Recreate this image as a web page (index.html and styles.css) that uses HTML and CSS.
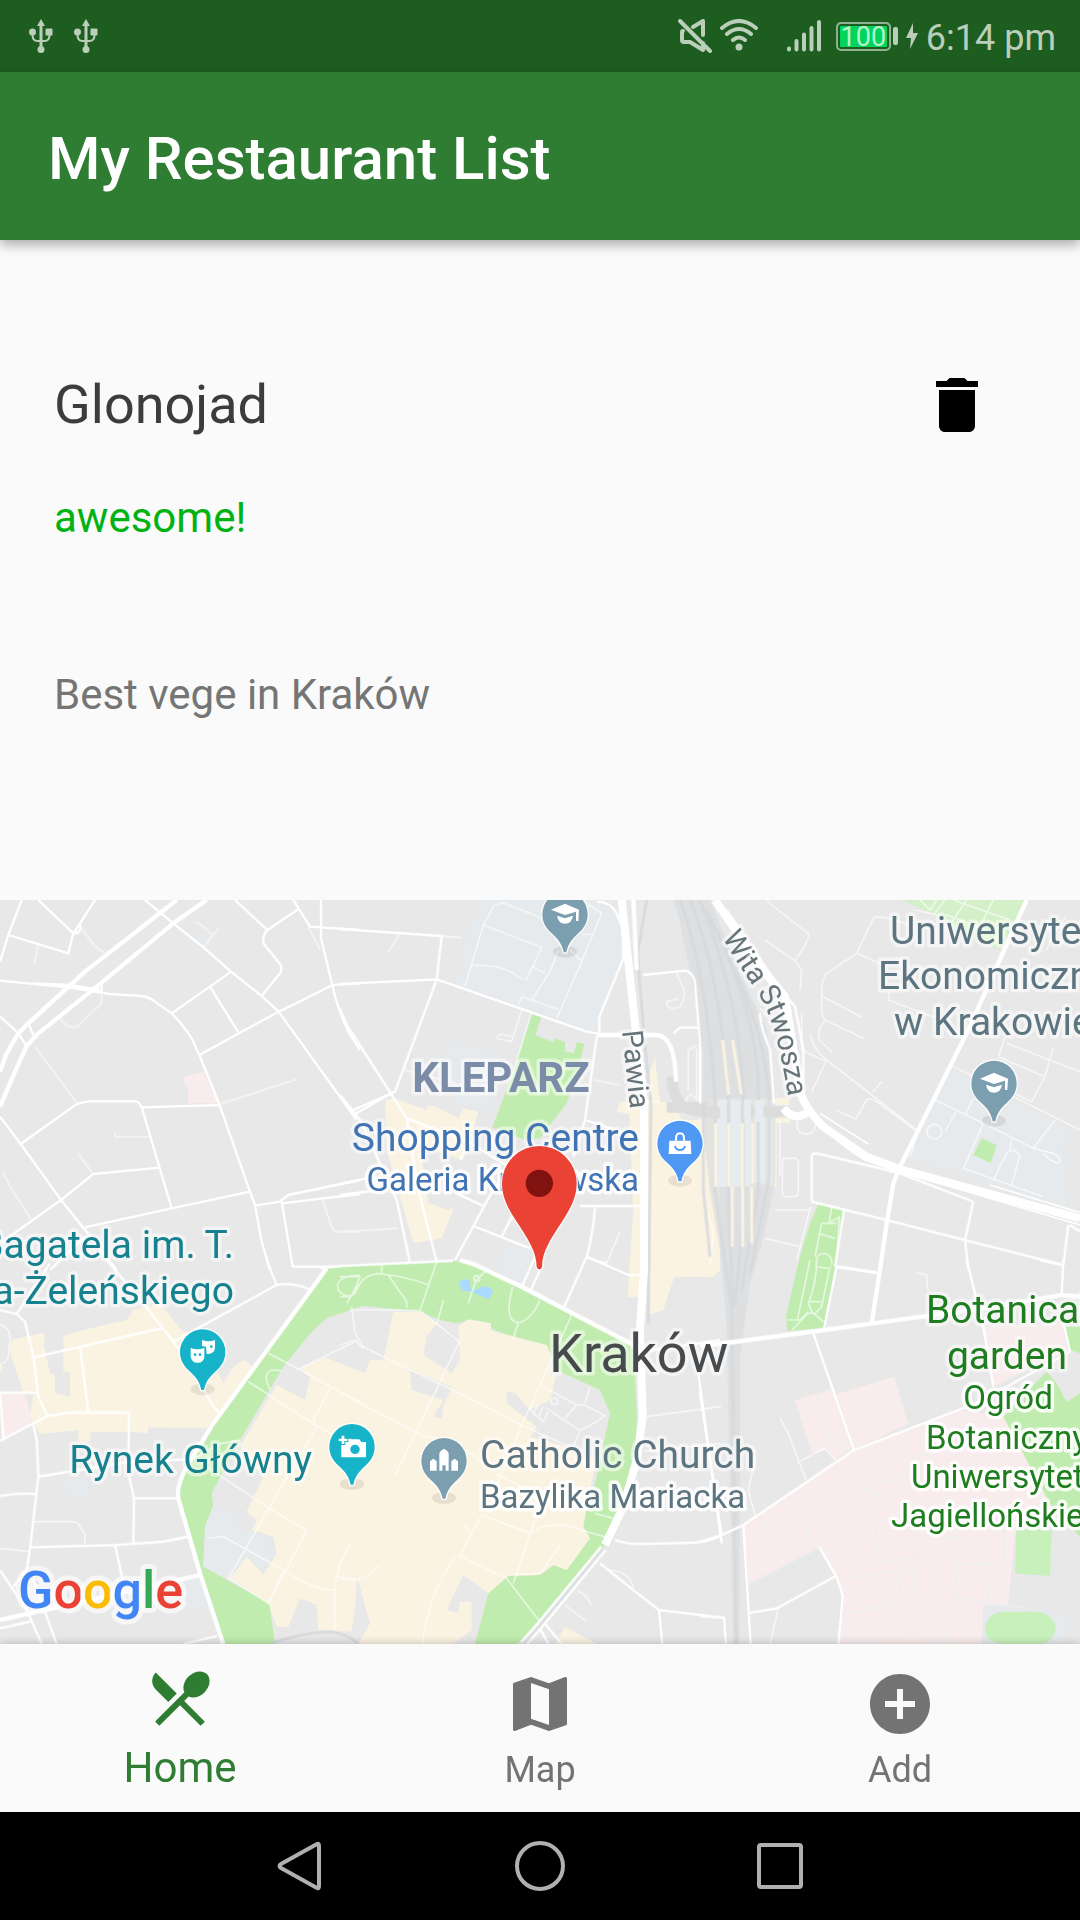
FILE: index.html
```html
<!DOCTYPE html>
<html lang="en">
<head>
<meta charset="utf-8">
<meta name="viewport" content="width=device-width, initial-scale=1">
<title>My Restaurant List</title>
<link rel="stylesheet" href="styles.css">
</head>
<body>
<div class="app">
  <div class="status">
    <svg class="usb" viewBox="0 0 24 34"><path d="M12 0l4 7H8zM10.500 6h3v22h-3z"/><circle cx="12" cy="30.500" r="3.500"/><circle cx="3.500" cy="13" r="3.500"/><rect x="16.500" y="9.500" width="7" height="7" rx="1"/><path class="line" d="M3.500 14v2q0 6 5 6h7q5 0 5-6v-2"/></svg>
    <svg class="usb" viewBox="0 0 24 34"><path d="M12 0l4 7H8zM10.500 6h3v22h-3z"/><circle cx="12" cy="30.500" r="3.500"/><circle cx="3.500" cy="13" r="3.500"/><rect x="16.500" y="9.500" width="7" height="7" rx="1"/><path class="line" d="M3.500 14v2q0 6 5 6h7q5 0 5-6v-2"/></svg>
    <div class="status-end">
      <svg class="mute" viewBox="0 0 34 34"><path class="bold" d="M2 2l30 30M5 12q-1 0-1 1v8q0 2 2 2h6l13 8V24M15 8l10-6v14"/></svg>
      <svg class="wifi" viewBox="0 0 38 34"><path class="bold" d="M2 9q17-14 34 0M7 15q12-10 24 0M13 21q6-5 12 0"/><circle cx="19" cy="28" r="3.500"/></svg>
      <svg class="signal" viewBox="0 0 34 34"><path class="bar" d="M2 29.500v1M9.500 22v8.500M17 15.500v15M24.500 9v21.500M32 3v27.500"/></svg>
      <span class="battery"><span class="charge">100</span></span>
      <svg class="bolt" viewBox="0 0 12 26"><path d="M7 0L0 15h5L4 26 12 10H7z"/></svg>
      <time class="clock">6:14 pm</time>
    </div>
  </div>

  <header class="appbar"><h1>My Restaurant List</h1></header>

  <main>
    <article class="place">
      <div class="place-head">
        <h2>Glonojad</h2>
        <button class="delete" type="button" aria-label="Delete">
          <svg viewBox="0 0 24 24"><path d="M6 19c0 1.100.9 2 2 2h8c1.100 0 2-.9 2-2V7H6v12zM19 4h-3.500l-1-1h-5l-1 1H5v2h14V4z"/></svg>
        </button>
      </div>
      <p class="rating">awesome!</p>
      <p class="note">Best vege in Kraków</p>
    </article>

    <svg class="map" viewBox="0 0 1080 744" preserveAspectRatio="xMidYMid slice" role="img" aria-label="Map of Kraków">
      <defs>
        <g id="poi">
          <ellipse class="pin-shadow" cx="0" cy="112" rx="36" ry="18"/>
          <path class="pin-body" d="M-68 0A68 68 0 0 1 68 0C68 26 55 44 40 57C15 79 8 95 4 114H-4C-8 95-15 79-40 57C-55 44-68 26-68 0Z"/>
        </g>
        <g id="cap"><path d="M-42-14L0-32 42-14 40 20H33V-8L0 2ZM-24 4L0 12 24 4Q20 28 0 28T-24 4Z"/></g>
        <path id="wita" d="M722 37C736 63 751 81 763 102C778 133 782 163 789 200"/>
      </defs>

      <svg width="1080" height="744" viewBox="0 0 3240 2232">
        <!-- land use -->
        <g transform="translate(0 -30)">
          <path class="pink" d="M552 560L612 546 655 640H564V590L554 588Z"/>
          <path class="campus" d="M597 125L650 160 630 185 580 150ZM535 960L552 958 560 990 540 992Z"/>
        </g>
        <g transform="translate(1020 -30)">
          <path class="campus" d="M425 30H800Q850 60 850 140V200L778 370V425L740 420 640 380 345 285Q370 150 425 30ZM315 450L500 500 450 665 345 640 350 600 290 560ZM500 1060L580 1080 540 1200 470 1140Z"/>
          <path class="sand" d="M135 630L160 625 262 660V645L290 650 355 685 370 655 415 665 400 720 370 810 240 770 265 940 325 960 343 950 305 1045 220 1060 140 780ZM840 635H905V1220H863L880 960 868 672 830 665ZM925 560L945 500 960 635H1000L1025 690H1140V1140L1120 1160H1003L970 1260 925 1275Z"/>
          <path class="park" d="M573 373L604 382 586 436 640 456 645 445 675 456V484L700 490 711 456 733 462 715 540 680 640 600 745 555 750 457 712 520 545Z"/>
        </g>
        <g transform="translate(2100 -30)">
          <path class="sand" d="M0 685H42V1160H0ZM20 625H268V645H20ZM20 685H270V698H230V890H20Z"/>
          <path class="park pale" d="M605 30H975L900 180 830 150 720 80Z"/>
          <path class="campus" d="M750 535L1110 720 1088 760 1095 950 1060 940 630 800 690 660Z"/>
          <path class="park" d="M845 745L890 765 872 820 820 795ZM355 943L432 960 405 1130 372 1315 262 1323 258 1280 297 1110 330 1000Z"/>
        </g>
        <g transform="translate(0 1080)">
          <path class="sand" d="M0 310V340L8 320ZM28 270L35 240 130 218 140 280 190 265V228L260 208 380 180 400 150 480 130 545 210 600 230 660 350 670 370 700 320 730 300 760 320 620 505 445 502V520L390 515H270L272 545H235V510L120 522 90 470 100 400 70 400Z"/>
          <path class="land" d="M130 250L190 250 190 335 210 335V410L165 400V345L150 340Z"/>
          <path class="pink" d="M0 402H75L100 490 10 537Z"/>
          <path class="campus" d="M180 660L265 655V715L230 715 210 725ZM555 965L600 950 640 1045 540 1062Z"/>
          <path class="park" d="M670 1152L600 940 545 760Q528 700 540 665L560 620 640 490 975 30 1000 20 1360 2 1420 12 1540 75 1900 260 1910 450V560L1870 740 1810 865 1620 1090 1550 1152H1425L1465 1000 1525 948 1620 945 1660 915 1700 930 1770 835 1745 800 1790 650 1830 460 1800 390 1670 330 1640 270 1470 205 1405 180 1370 190 1320 180 1260 155 1090 137 980 175 935 215 850 320 720 540 635 700 640 740 615 800 610 920 808 1030 825 1152Z"/>
          <path class="campus" d="M640 735L705 770 700 800 800 830 800 860 828 880 790 930 745 900 740 880 685 955 610 920 615 800Z"/>
          <path class="sand" d="M900 325L975 292 1095 340 1110 300 1150 300 1180 155 1260 155 1310 190 1280 230 1270 285 1355 340 1380 300 1375 200 1405 178 1473 190V212L1640 255 1655 290 1650 350 1670 340 1650 420 1590 450 1545 400 1520 395V430L1610 500 1590 530 1700 560 1740 600 1790 590 1750 800 1770 835 1700 930 1660 915 1620 945 1525 948 1465 1000 1390 945 1340 1050 1375 1060 1380 1025H1415V1110L1360 1152H1075L1110 1090 1085 1000 1070 940 1068 1020 1055 1115 955 1110 950 1035 900 1015 865 1100 830 1100 805 1030 690 955 740 890 790 945 830 880 820 830 755 810 770 780 740 755 790 650 720 560 830 375 915 420 930 350Z"/>
          <path class="land" d="M1230 330L1355 380 1330 440 1325 475 1300 470 1330 420 1235 390Z"/>
          <path class="water" d="M1378 70Q1390 50 1410 62L1412 88Q1430 92 1450 78 1480 82 1478 100L1465 118 1410 94 1385 92Z"/>
          <path class="sand" d="M1695 1100L1790 1152H1665Z"/>
        </g>
        <g transform="translate(2100 1080)">
          <path class="pink" d="M285 420L395 388 455 565 405 600 380 570 335 580ZM410 402L582 350 625 492 462 567ZM130 795L460 572 780 450 910 470 1080 740 945 820 925 1035H850V1152H415L428 1000 408 945 358 862 147 970ZM845 200L1090 190 1100 270 880 380Z"/>
          <path class="park" d="M1095 200H1140V280L1110 270ZM910 470L1040 335 1070 370 1100 425 1140 400V830L1060 750Z"/>
          <path class="campus" d="M850 1035L1097 1060 1090 1152H845Z"/>
          <path class="park pitch" d="M950 800L1055 810 1050 948 945 940ZM905 1055H1020Q1067 1070 1067 1110 1060 1140 1030 1152H900Q855 1140 855 1110 860 1060 905 1055Z"/>
        </g>

        <!-- footpaths and lanes -->
        <g class="lane">
          <path transform="translate(0 -30)" d="M115 165L102 225M245 115L285 170 315 190M105 470L230 638M345 725V740H445M235 790L278 850M10 845L30 890 95 990M660 642L890 568M590 95L640 135M610 170L655 115M305 310V340L230 410Q205 420 180 385M968 930L995 1010Q1000 1025 1020 1025H1080M925 110L960 180"/>
          <path transform="translate(1020 -30)" d="M375 290L430 105 460 50Q480 35 500 42L620 90M430 105L605 172 560 268Q540 268 520 250 480 225 395 225M650 385L725 215 785 70 740 40M575 330L630 245 655 180M575 228L615 250M725 133H755M690 180L725 213M535 345L545 320 655 358M545 360L515 455 470 445 480 432 515 440M573 373L520 545M0 1025L175 1015M178 132L145 187M305 138L365 143M195 540L350 580M760 570L840 585M1010 250L1025 285Q1045 310 1020 350 980 365 980 335L1015 325M1045 600V480L1080 460M1070 630V480Q1080 465 1090 480V640M1035 635L1050 612 1100 650M960 635H905M1105 970L1120 1030 1110 1130M840 1025L800 1120"/>
          <path transform="translate(2100 -30)" d="M200 30Q230 60 325 130 332 145 285 212L195 150M285 212L305 240 300 300M470 190L380 250Q365 270 365 300V370L375 390 490 445M365 318L487 382M375 390Q350 420 358 450L398 488M470 190L520 85Q540 70 640 110M470 190L560 230M330 430Q340 480 380 510L335 605M380 510L650 720M518 607L545 575M408 660L468 687 500 630Q510 622 530 635L645 720M705 630L850 700 1000 775 1065 690M750 525L1140 720M850 700L790 835 1030 920M880 870L920 790Q940 770 960 795L935 885M935 745L930 780M1000 775L1060 790Q1090 805 1075 820 1050 815 1030 790M735 725L768 665M795 675L820 625M895 500L1035 560 1060 470M920 460L1140 545M995 635L1035 560M995 635L890 585M915 440L895 500M570 300L565 330 750 400M305 370V480L380 515M180 355L200 380M247 817Q247 805 260 805H285Q295 806 295 817V905Q295 920 280 920H255Q247 918 247 900ZM225 960H335M195 1045L300 1070M332 950L290 1110M240 690V860M640 60L720 75M660 30L690 60 710 30M700 75L735 30M745 110L800 30M740 75L860 120M760 30L930 90M830 130L880 30M1040 180L1060 130 1100 80M630 800L660 710"/>
          <circle cx="2803" cy="695" r="22"/><circle cx="2418" cy="675" r="28"/>
          <path transform="translate(0 1080)" d="M0 195Q30 200 30 235L25 290Q20 310 0 312M100 785H210Q240 785 240 800L255 825V852M0 865L90 875M805 280L900 330 1000 385 1080 425M745 365L860 440 945 495 1040 545M950 500L940 480 990 385M890 330L1075 240M950 500L685 955 805 1030 850 930M590 600L800 740 920 812 805 1030M620 835L670 830 850 930Q940 990 1005 990L1003 1110M1005 1000Q1005 930 1050 850M1010 950L1080 960M810 388Q785 340 815 330L845 332M575 598L665 550 720 540M1080 45Q1000 50 1015 90 1040 120 1065 100L1080 70"/>
          <path transform="translate(1020 1080)" d="M125 15V42M0 50H60Q40 100 20 130M0 110H30L70 58Q90 40 125 42 200 50 268 75M290 5L240 152 300 200 358 245 165 648M145 45L200 125V145M30 150H160L240 152M35 140L45 220 70 260 230 340 360 400 545 495 720 575M0 398L250 528 300 535M0 255L45 240 70 265M385 130L408 60 440 32M518 80Q490 185 535 188 575 180 600 120M535 188L518 240M695 165L600 375 545 495 465 690M600 375L710 435H735L795 467 770 485 720 512 620 445M735 430L750 380M710 435L675 475M310 120L290 195M720 512L700 560M580 425L570 450 610 485 625 455M595 430L580 465M608 440L595 475M425 765L570 820Q600 795 650 795 690 795 725 810L800 832M425 765L360 888 500 955 600 1085M380 570L430 610M465 640L590 700M345 890L305 955Q255 1060 248 1152M360 888H345M585 780L570 820 520 970M525 942Q600 945 610 930L660 855M370 790L395 825M120 915Q80 960 30 960L0 955M30 850L0 915M765 760L820 775M920 470L1140 440M910 575L1140 550M800 930Q870 930 880 985M712 990Q745 1010 753 1035M675 1035L740 1085"/>
          <circle cx="1430" cy="1136" r="9"/><circle cx="1663" cy="1504" r="10"/>
          <path transform="translate(2100 1080)" d="M240 475L265 520 318 660M292 608L375 565 405 600M165 570V600L145 690 165 765M235 1045L210 1152M0 450L65 438M650 38L680 45 683 90M330 0L292 180M350 0Q350 70 325 130L335 155 370 185M345 20L385 25M325 125H365M390 20L365 140 345 160H325L275 210M260 180H300L325 155M360 950"/>
          <path transform="translate(2100 -30)" d="M365 1000L345 1100M395 950L388 1000 418 980 410 1110M365 1000H410M355 1030L405 1045M350 1120Q345 1090 375 1090 400 1100 395 1125"/>
        </g>
        <path class="garden-lane" transform="translate(2100 1080)" d="M350 405L398 555 450 540M350 405L395 388M265 705L305 782M175 765L245 863 320 825V803M222 833L300 785M320 803L503 683 620 640 640 590 760 560M503 683Q530 720 580 725M510 700L542 908 658 885 650 840 700 820M375 880L450 840 468 850 498 900M420 958L652 925 612 1115 735 1150 778 910V820M778 910H912V810M758 1008L860 1030 878 950 865 912M860 1030L990 1045M590 935Q602 990 600 1020L468 1058 425 1062M415 1135L540 1148M658 885L652 925M730 830H780M147 970L358 862"/>

        <!-- railway -->
        <g transform="translate(2100 -30)">
          <path class="rail-area" d="M-80 30L30 30 110 230 200 420 225 620V880L180 1080 150 1180 120 1400 118 2262H100L80 1300 60 1080 30 900 0 640-10 340-60 100Z"/>
          <path class="platform" d="M52 630H80V890H52ZM92 630H122V890H92ZM132 630H152V890H132ZM164 630H196V880H164ZM204 630H218V880H204Z"/>
          <path class="rail" d="M-60 30Q20 250 45 620V900L95 1250 108 2262M-30 30Q60 250 85 620V950L100 1250M0 30Q120 330 130 620V980L105 1250M20 60Q180 380 175 620V900L125 1200M30 90Q200 400 208 640V860L150 1150"/>
          <path class="sand-line" d="M68 450L86 615M98 450L124 612M47 700V890M86 700V890M127 700V890M158 700V880M97 890V1070M128 890V1070M155 890V1060"/>
          <path class="overpass" d="M-100 652H20"/><path class="overpass" d="M20 665H250"/>
          <path class="platform" d="M52 630H80V695H52ZM92 630H122V695H92ZM132 630H152V695H132ZM164 630H190V695H164Z"/>
        </g>
        <g transform="translate(1020 -30)">
          <path class="overpass" d="M995 560Q1000 625 1030 650 1060 668 1140 668"/>
          <path class="rail" d="M920 30L893 190 912 440 933 640 925 1300"/>
          <path class="rail" d="M1090 640V900L1110 1100"/>
        </g>
        <path class="rail" transform="translate(0 1080)" d="M810 1152Q900 1118 990 1115 1040 1120 1075 1152"/>

        <!-- streets -->
        <g class="street">
          <path transform="translate(0 -30)" d="M65 30L25 135 0 215M25 135L205 190 220 130 115 30M220 130L240 100 285 30M222 130Q245 130 240 102M0 272L205 292 330 312 425 318Q445 320 465 335L515 370Q550 405 575 445L598 495 657 640 750 905 765 945 785 1055 810 1140M100 280L205 285 300 300M305 310V280M435 30L520 100 610 172 693 245 785 318 836 365 1070 690M515 370L630 290 693 245M630 290L717 430M598 495L717 430 836 365 885 342 997 285 1080 280M785 318L840 250Q848 235 840 222L790 160Q788 135 802 120L705 30M802 120L895 58M880 30L930 110 1080 120M963 30V145L997 285Q1010 350 1045 425L1080 480M0 380L50 425M55 430L80 468M85 400L100 435M62 762L230 642 265 634H405Q418 634 425 652L515 955M425 652L657 645M0 680L62 762 183 930 255 1020 350 1140M0 1060L183 930 280 852 478 833M255 1012L515 955 750 905M765 947L840 935 865 915 1080 870M845 940L1080 912M845 935L878 1130H1020M150 1140L255 1040"/>
          <path transform="translate(1020 -30)" d="M0 117L305 138 290 268 0 282M290 268L740 425 770 430M290 268L165 605M0 355Q15 400 40 435L200 685 235 900 290 1115M40 660L165 605M45 672L150 612M0 615L60 690 170 930 210 1118M200 685L385 755 520 840M385 755L360 810M0 882L80 865M0 915L120 900M350 910L430 948M470 880L400 1008 345 1110M400 1008L570 1075M515 980L485 1040M720 948H905M765 950Q760 1030 740 1100L668 1260M740 1100L865 1155H900M770 440L735 690 700 800M778 440V380L850 205V120L830 70Q810 35 770 35M735 690L905 745M910 255L1035 242Q1060 245 1065 280L1080 460V630M1000 430L1020 413H1080M545 1190L590 1090M570 1205L600 1140"/>
          <path transform="translate(2100 -30)" d="M335 935L560 990 795 1050 1090 1125M820 935L795 1050 805 1140M1105 1005L1090 1125M600 850L820 935M410 1130L530 1148M1110 1005L1140 1025M335 935V800Q335 790 350 790L520 830 600 850M180 370Q178 400 210 480L222 640M0 480V640M80 60L250 310 285 350 310 480V600M432 960L405 1130"/>
          <path transform="translate(0 1080)" d="M0 150L50 162 75 185 100 290 115 410 142 468M50 162L150 10M320 0L430 130 520 245 560 300 640 440 662 462M100 292L485 205M520 245L830 75 800 0M830 75Q870 65 930 88M240 262L265 455M0 543L142 468 205 458H387L385 640 402 715 400 850M0 398H110M0 400L10 535M100 495L110 540 115 650 90 865 80 930 40 980M115 650L390 605 575 598M400 715H535M0 708Q60 698 112 702M90 862L345 855 490 845 565 830M345 855L370 970M0 930L80 1050 125 1152M100 960L170 1152M550 1152L650 1128M0 1105L90 1085"/>
          <path transform="translate(1020 1080)" d="M-60 25L0 18 340 2M760 0L800 10M905 275L1140 240M1075 340L1145 850M825 840Q860 852 900 852L1060 848Q1110 845 1140 828M780 910L880 990 957 1050 1140 1072M957 1050L967 1152M610 1085L665 1152M595 1095L625 1152"/>
          <path transform="translate(2100 1080)" d="M340 220L462 570M130 795L462 570 840 425 1110 275 1090 185M130 795L152 1152M0 845L65 825 130 795M0 400L65 825M150 1058L230 1045 408 948 358 862M408 948Q425 990 428 1010L415 1152M0 1068L72 1073 78 1152M410 20L530 38M800 0L850 200 880 380M1090 0L1085 105M1020 0L1090 15M410 20L372 205"/>
        </g>

        <!-- main roads -->
        <g class="avenue">
          <path transform="translate(0 -30)" d="M0 545L20 490 55 430 85 400 255 245 530 30M0 650L45 545 80 468 115 430 290 290 520 100 620 30"/>
          <path transform="translate(1020 -30)" d="M770 435H950Q1005 438 1008 575M880 30L890 240"/>
          <path transform="translate(2100 -30)" d="M980 30L800 430 600 830 580 880 560 1000 540 1140 515 1300"/>
          <path transform="translate(0 1080)" d="M980 25L640 490 560 620Q528 680 535 715L600 940 670 1152M0 1080L200 1035 600 945"/>
          <path transform="translate(1020 1080)" d="M360 0L400 12 545 80 890 260"/>
          <path transform="translate(2100 1080)" d="M0 258L108 245 335 215 520 190 850 145 1085 105 1140 110"/>
        </g>
        <g class="highway">
          <path transform="translate(1020 -30)" d="M845 30L885 400 912 640V1140L900 1320 908 1580 890 1710 850 1850 795 1965"/>
          <path transform="translate(2100 -30)" d="M45 30L180 230 255 320 300 600Q310 650 370 710L500 800 600 838 1140 985M250 655Q290 700 330 660"/>
        </g>
        <path class="highway-line" transform="translate(2100 -30)" d="M340 680Q420 770 500 812L600 845 1140 1005M360 670L505 762M870 885L1140 968"/>
        <path class="highway" transform="translate(1020 1080)" d="M790 865L600 1095 550 1152"/>
        <path class="rail" transform="translate(1020 1080)" d="M790 865L600 1095 550 1152"/>
      </svg>

      <!-- labels -->
      <g class="label">
        <text class="l-district" x="501" y="192" text-anchor="middle">KLEPARZ</text>
        <g class="c-shop"><text class="l-main" x="639" y="251" text-anchor="end">Shopping Centre</text><text class="l-sub" x="639" y="291" text-anchor="end">Galeria Krakowska</text></g>
        <g class="c-street"><text class="l-street" transform="translate(622 131) rotate(84)">Pawia</text><text class="l-street"><textPath href="#wita">Wita Stwosza</textPath></text></g>
        <g class="c-civic"><text class="l-main" x="890" y="44">Uniwersytet</text><text class="l-main" x="878" y="89">Ekonomiczny</text><text class="l-main" x="894" y="135">w Krakowie</text><text class="l-main" x="480" y="568">Catholic Church</text><text class="l-sub" x="480" y="608">Bazylika Mariacka</text></g>
        <g class="c-sight"><text class="l-main" x="234" y="358" text-anchor="end">Bagatela im. T.</text><text class="l-main" x="234" y="404" text-anchor="end">Boya-Żeleńskiego</text><text class="l-main" x="312" y="573" text-anchor="end">Rynek Główny</text></g>
        <text class="l-city" x="549" y="472">Kraków</text>
        <g class="c-garden"><text class="l-main" x="926" y="423">Botanical</text><text class="l-main" x="1007" y="469" text-anchor="middle">garden</text><text class="l-sub" x="1008" y="509" text-anchor="middle">Ogród</text><text class="l-sub" x="926" y="549">Botaniczny</text><text class="l-sub" x="911" y="588">Uniwersytetu</text><text class="l-sub" x="891" y="627">Jagiellońskiego</text></g>
      </g>
      <text class="google" x="18" y="708"><tspan class="g-blue">G</tspan><tspan class="g-red">o</tspan><tspan class="g-yellow">o</tspan><tspan class="g-blue">g</tspan><tspan class="g-green">l</tspan><tspan class="g-red">e</tspan></text>

      <!-- pins -->
      <svg width="1080" height="744" viewBox="0 0 3240 2232">
        <g class="pin civic" transform="translate(1695 43)"><use href="#poi"/><use class="glyph" href="#cap"/></g>
        <g class="pin civic" transform="translate(2982 550)"><use href="#poi"/><use class="glyph" href="#cap"/></g>
        <g class="pin shop" transform="translate(2040 730)"><use href="#poi"/><path class="glyph" d="M-32-8H32L34 32H-34Z"/><path class="glyph-line" d="M-12-8V-14Q-12-30 0-30T12-14V-8"/><path class="cut-line" d="M-15 8Q-12 20 0 20T15 8"/></g>
        <g class="pin sight" transform="translate(608 1356)"><use href="#poi"/><path class="glyph" d="M-36-12Q-15-4 5-12V14Q3 32-15 32T-36 14ZM-2-36Q18-28 37-36V-12Q35 6 12 6L10-16-2-18Z"/><circle class="cut" cx="-23" cy="8" r="4"/><circle class="cut" cx="-8" cy="8" r="4"/><circle class="cut" cx="26" cy="-16" r="4"/></g>
        <g class="pin sight" transform="translate(1056 1640)"><use href="#poi"/><path class="glyph" d="M-32-5H-20V-14H-11V-24H-4L0-22H22L28-14H42V32H-32ZM-40-24H-31V-33H-23V-24H-14V-17H-23V-8H-31V-17H-40Z"/><circle class="cut" cx="9" cy="8" r="14"/></g>
        <g class="pin civic" transform="translate(1332 1682)"><use href="#poi"/><path class="glyph" d="M-42 30V2L-32-6-22 2V30ZM22 30V2L32-6 42 2V30ZM-14 30V-22Q-12-30 0-36 12-30 14-22V30H5V14H-5V30Z"/></g>
        <g class="pin here" transform="translate(1618 850)"><path class="pin-body" d="M-112 0A112 112 0 0 1 112 0C112 40 95 75 68 115C35 165 8 205 8 250Q6 258 0 258T-8 250C-8 205-35 165-68 115C-95 75-112 40-112 0Z"/><circle class="dot" r="41"/></g>
      </svg>
    </svg>
  </main>

  <nav class="tabs" aria-label="Sections">
    <a class="tab active" href="#home" aria-current="page"><svg viewBox="0 0 24 24"><path d="M8.100 13.340l2.830-2.830L3.910 3.500c-1.560 1.560-1.560 4.090 0 5.660l4.190 4.180zm6.780-1.810c1.530.71 3.680.21 5.270-1.380 1.910-1.910 2.280-4.650.81-6.120-1.460-1.460-4.200-1.100-6.120.81-1.590 1.590-2.090 3.740-1.380 5.270L3.700 19.870l1.410 1.410L12 14.410l6.880 6.880 1.410-1.410L13.410 13l1.470-1.470z"/></svg><span>Home</span></a>
    <a class="tab" href="#map"><svg viewBox="0 0 24 24"><path d="M20.500 3l-.16.03L15 5.100 9 3 3.360 4.900c-.21.07-.36.25-.36.48V20.500c0 .28.22.5.5.5l.16-.03L9 18.900l6 2.100 5.640-1.900c.21-.07.36-.25.36-.48V3.500c0-.28-.22-.5-.5-.5zM15 19l-6-2.110V5l6 2.110V19z"/></svg><span>Map</span></a>
    <a class="tab" href="#add"><svg viewBox="0 0 24 24"><path d="M12 2C6.480 2 2 6.480 2 12s4.480 10 10 10 10-4.480 10-10S17.520 2 12 2zm5 11h-4v4h-2v-4H7v-2h4V7h2v4h4v2z"/></svg><span>Add</span></a>
  </nav>

  <div class="system">
    <button type="button" aria-label="Back"><svg viewBox="0 0 54 54"><path d="M44 5Q46 4 46 7V47Q46 50 44 49L8 29Q5 27 8 25Z"/></svg></button>
    <button type="button" aria-label="Home screen"><svg viewBox="0 0 54 54"><circle cx="27" cy="27" r="23"/></svg></button>
    <button type="button" aria-label="Recent apps"><svg viewBox="0 0 54 54"><rect x="6" y="6" width="42" height="42" rx="2"/></svg></button>
  </div>
</div>
</body>
</html>
```
FILE: styles.css
```css
* { box-sizing: border-box; }
body { margin: 0; background: #fafafa; font-family: Roboto, "Noto Sans", sans-serif; }
h1, h2, p { margin: 0; font-weight: 400; }
svg { display: block; }
button { padding: 0; border: 0; background: none; }

.app { display: flex; flex-direction: column; min-height: 100vh; }

/* status bar */
.status { display: flex; align-items: center; gap: 21px; height: 72px; padding: 0 24px 0 29px; background: #1d5e20; color: #bbceba; fill: #bbceba; }
.status .line, .status .bold, .status .bar { fill: none; stroke: #bbceba; stroke-width: 2; stroke-linecap: round; stroke-linejoin: round; }
.status .bold { stroke-width: 4; }
.status .bar { stroke-width: 4; }
.usb { width: 24px; height: 34px; }
.status-end { display: flex; align-items: center; gap: 8px; margin-left: auto; }
.mute, .signal { width: 34px; height: 34px; }
.wifi { width: 38px; height: 34px; }
.signal { margin: 0 7px 0 21px; }
.battery { position: relative; width: 62px; height: 29px; }
.battery::after { content: ""; position: absolute; right: 0; top: 5px; width: 5px; height: 18px; border-radius: 2px; background: #bbceba; }
.charge { display: block; width: 55px; height: 29px; border: 2px solid #8fb091; border-radius: 5px; background: #00d45c; box-shadow: inset 0 0 0 2px #1d5e20; color: #b4f4cc; font-size: 27px; line-height: 27px; text-align: center; }
.bolt { width: 12px; height: 26px; }
.clock { padding-top: 4px; font-size: 36px; line-height: 48px; }

.appbar { position: relative; z-index: 1; display: flex; align-items: center; height: 168px; padding: 6px 48px 0; background: #2f7d32; box-shadow: 0 4px 12px rgba(0, 0, 0, .35); color: #fff; }
.appbar h1 { font-size: 60px; line-height: 72px; font-weight: 500; }

main { display: flex; flex: 1; flex-direction: column; }

/* restaurant entry */
.place { padding: 129px 87px 181px 54px; }
.place-head { display: flex; align-items: center; justify-content: space-between; }
.place h2 { color: #3c3c3c; font-size: 54px; line-height: 72px; }
.delete, .delete svg { width: 72px; height: 72px; }
.rating, .note { font-size: 42px; line-height: 48px; }
.rating { margin-top: 53px; color: #00b212; }
.note { margin-top: 129px; color: #757575; }

/* map */
.map { flex: 1; width: 100%; min-height: 600px; background: #e8e8e8; overflow: hidden; }
.land { fill: #e8e8e8; }
.sand { fill: #fbf3e1; }
.park { fill: #c1ecaf; }
.park.pale { fill: #d4f0c8; }
.park.pitch { fill: #c8f0bb; }
.pink { fill: #f9ecec; }
.campus { fill: #e6eaed; }
.water { fill: #aadaff; }
.lane, .street, .avenue, .highway, .highway-line, .rail, .overpass, .garden-lane, .sand-line { fill: none; stroke: #fff; stroke-linejoin: round; }
.lane { stroke-width: 5; opacity: .6; }
.garden-lane { stroke: #edefef; stroke-width: 5; }
.street { stroke-width: 7; }
.avenue { stroke-width: 13; }
.highway { stroke-width: 24; }
.highway-line { stroke-width: 5; }
.rail-area { fill: #d9dcde; opacity: .7; }
.rail { stroke: #d5d9dc; stroke-width: 9; opacity: .85; }
.platform { fill: #e6ecef; }
.sand-line { stroke: #fbf3e1; stroke-width: 9; }
.overpass { stroke: #dcdcdc; stroke-width: 32; }

.label { paint-order: stroke; stroke: rgba(255, 255, 255, .5); stroke-width: 7px; stroke-linejoin: round; }
.l-main { font-size: 39px; }
.l-sub { font-size: 33px; stroke: rgba(255, 255, 255, .85); }
.l-street { font-size: 29px; }
.l-district { font-size: 42px; font-weight: 700; fill: #7b8ca8; }
.l-city { font-size: 54px; fill: #484b4e; }
.c-shop { fill: #4174b4; }
.c-street { fill: #66747a; }
.c-civic { fill: #5c7580; }
.c-sight { fill: #16828f; }
.c-garden { fill: #1e7d1e; }

.google { font-size: 52px; font-weight: 500; paint-order: stroke; stroke: rgba(255, 255, 255, .6); stroke-width: 10px; stroke-linejoin: round; }
.g-blue { fill: #4285f4; }
.g-red { fill: #ea4335; }
.g-yellow { fill: #fbbc05; }
.g-green { fill: #34a853; }

.pin-shadow { fill: #000; opacity: .08; }
.pin-body { fill: currentColor; stroke: #fff; stroke-opacity: .85; stroke-width: 8; paint-order: stroke; }
.civic { color: #7c9fb0; }
.shop { color: #4f99f5; }
.sight { color: #16b3c9; }
.here { color: #ea4335; }
.dot { fill: #80120f; }
.glyph { fill: #fff; }
.glyph-line { fill: none; stroke: #fff; stroke-width: 6; }
.cut { fill: currentColor; }
.cut-line { fill: none; stroke: currentColor; stroke-width: 6; }

/* bottom navigation */
.tabs { position: relative; display: grid; grid-template-columns: repeat(3, 1fr); height: 168px; background: #fafafa; box-shadow: 0 -1px 8px rgba(0, 0, 0, .2); }
.tab { display: flex; flex-direction: column; align-items: center; gap: 6px; padding-top: 24px; color: #737373; fill: #737373; font-size: 36px; line-height: 48px; text-decoration: none; }
.tab svg { width: 72px; height: 72px; }
.tab.active { gap: 10px; padding-top: 18px; color: #2f7d32; fill: #2f7d32; font-size: 42px; }

/* system keys */
.system { display: flex; justify-content: center; height: 108px; background: #000; }
.system button { display: flex; align-items: center; justify-content: center; width: 240px; }
.system svg { width: 54px; height: 54px; fill: none; stroke: #b0b0b0; stroke-width: 4; stroke-linejoin: round; }
```
